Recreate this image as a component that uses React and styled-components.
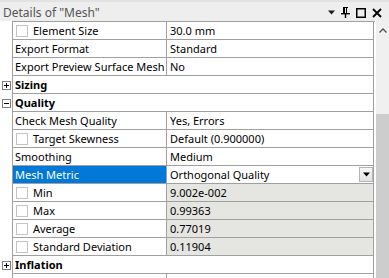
import React from 'react';
import styled, { createGlobalStyle, css } from 'styled-components';

const GlobalStyle = createGlobalStyle`
  html, body {
    margin: 0;
    padding: 0;
    background: #ffffff;
  }
  body {
    font-family: "Noto Sans", "Open Sans", sans-serif;
    font-size: 11px;
    color: #000;
  }
`;

const Panel = styled.div`
  width: 389px;
  height: 278px;
  overflow: hidden;
  display: flex;
  flex-direction: column;
  background: #ffffff;
`;

const TitleBar = styled.div`
  height: 21px;
  flex: 0 0 21px;
  display: flex;
  align-items: center;
  gap: 4px;
  padding: 2px 7px 0 3px;
  box-sizing: border-box;
  background: #eeeeee;
  border-top: 2px solid #e2e2e2;
  color: #555555;
  font-size: 12px;
`;

const Grip = styled.div`
  flex: 1;
  height: 4px;
  margin: 2px 4px 0 2px;
  background-image: radial-gradient(circle, #c4c4c4 0.5px, transparent 0.6px);
  background-size: 2px 2px;
`;

const TitleIcons = styled.div`
  display: flex;
  align-items: center;
  gap: 6px;
`;

const Body = styled.div`
  flex: 1;
  display: flex;
  min-height: 0;
`;

const Grid = styled.div`
  width: 375px;
  display: flex;
  flex-direction: column;
`;

const Row = styled.div`
  display: grid;
  grid-template-columns: 12px 154px 208px;
  height: 18px;
  flex: 0 0 18px;
`;

const Gutter = styled.div`
  display: flex;
  align-items: center;
  justify-content: center;
  padding-left: 1px;
`;

const Toggle = styled.div`
  width: 7px;
  height: 7px;
  border: 1px solid #808080;
  position: relative;
  background: #fff;
  &::before {
    content: '';
    position: absolute;
    left: 1px;
    right: 1px;
    top: 3px;
    height: 1px;
    background: #000;
  }
  ${({ open }) => !open && css`
    &::after {
      content: '';
      position: absolute;
      top: 1px;
      bottom: 1px;
      left: 3px;
      width: 1px;
      background: #000;
    }
  `}
`;

const NameCell = styled.div`
  display: flex;
  align-items: center;
  gap: 5px;
  padding-left: ${({ indent }) => (indent ? '3px' : '2px')};
  border-left: 1px solid #a0a0a0;
  border-bottom: 1px solid #a0a0a0;
  white-space: nowrap;
  overflow: hidden;
  ${({ selected }) => selected && css`
    background: #0078d7;
    color: #ffffff;
  `}
`;

const ValueCell = styled.div`
  display: flex;
  align-items: center;
  padding-left: 3px;
  border-left: 1px solid #a0a0a0;
  border-right: 1px solid #a0a0a0;
  border-bottom: 1px solid #a0a0a0;
  white-space: nowrap;
  background: ${({ readOnly }) => (readOnly ? '#e5e5e2' : '#ffffff')};
`;

const CategoryCell = styled.div`
  grid-column: 2 / 4;
  display: flex;
  align-items: center;
  padding-left: 2px;
  font-weight: bold;
  border-left: 1px solid #a0a0a0;
  border-right: 1px solid #a0a0a0;
  border-bottom: 1px solid #a0a0a0;
`;

const TopLine = styled.div`
  margin-left: 12px;
  width: 363px;
  height: 1px;
  flex: 0 0 1px;
  background: #a0a0a0;
`;

const Check = styled.span`
  width: 10px;
  height: 10px;
  border: 1px solid #c4c4c4;
  background: #fff;
  flex: 0 0 auto;
`;

const DropButton = styled.div`
  margin-left: auto;
  width: 14px;
  height: 15px;
  box-sizing: border-box;
  border: 1px solid #b5b5b5;
  background: linear-gradient(#f7f7f7, #e2e2e2);
  display: flex;
  align-items: center;
  justify-content: center;
`;

const Scrollbar = styled.div`
  width: 13px;
  margin-left: 1px;
  background: #f0f0f0;
  display: flex;
  flex-direction: column;
  align-items: center;
`;

const ArrowBox = styled.div`
  height: 18px;
  flex: 0 0 18px;
  display: flex;
  align-items: center;
  justify-content: center;
`;

const Thumb = styled.div`
  margin-top: 75px;
  width: 13px;
  flex: 1;
  background: #cdcdcd;
`;

const DownTri = ({ size = 7, color = '#000' }) => (
  <svg width={size} height={Math.ceil(size / 2) + 1} viewBox="0 0 7 4">
    <path d="M0 0H7L3.5 4Z" fill={color} />
  </svg>
);

const PinIcon = () => (
  <svg width="9" height="11" viewBox="0 0 9 11">
    <path d="M2 0H7V1H6V6H5V1H2Z" fill="#000" />
    <rect x="2" y="0" width="2" height="6" fill="#000" />
    <rect x="0" y="6" width="9" height="1.4" fill="#000" />
    <rect x="3.8" y="7" width="1.4" height="4" fill="#000" />
  </svg>
);

const MaxIcon = () => (
  <svg width="10" height="10" viewBox="0 0 10 10">
    <rect x="0.75" y="0.75" width="8.5" height="8.5" fill="none" stroke="#000" strokeWidth="1.5" />
  </svg>
);

const CloseIcon = () => (
  <svg width="10" height="10" viewBox="0 0 10 10">
    <path d="M1 1L9 9M9 1L1 9" stroke="#000" strokeWidth="1.8" />
  </svg>
);

const UpChevron = () => (
  <svg width="8" height="5" viewBox="0 0 8 5">
    <path d="M0.5 4.5L4 1L7.5 4.5" fill="none" stroke="#505050" strokeWidth="1.3" />
  </svg>
);

const rows = [
  { name: 'Element Size', value: '30.0 mm', check: true },
  { name: 'Export Format', value: 'Standard' },
  { name: 'Export Preview Surface Mesh', value: 'No' },
  { category: 'Sizing', open: false },
  { category: 'Quality', open: true },
  { name: 'Check Mesh Quality', value: 'Yes, Errors' },
  { name: 'Target Skewness', value: 'Default (0.900000)', check: true },
  { name: 'Smoothing', value: 'Medium' },
  { name: 'Mesh Metric', value: 'Orthogonal Quality', selected: true, dropdown: true },
  { name: 'Min', value: '9.002e-002', check: true, readOnly: true },
  { name: 'Max', value: '0.99363', check: true, readOnly: true },
  { name: 'Average', value: '0.77019', check: true, readOnly: true },
  { name: 'Standard Deviation', value: '0.11904', check: true, readOnly: true },
  { category: 'Inflation', open: false },
  { name: '', value: '' },
];

const App = () => (
  <>
    <GlobalStyle />
    <Panel>
      <TitleBar>
        <span>Details of "Mesh"</span>
        <Grip />
        <TitleIcons>
          <DownTri size={7} color="#1a1a1a" />
          <PinIcon />
          <MaxIcon />
          <CloseIcon />
        </TitleIcons>
      </TitleBar>
      <Body>
        <Grid>
          <TopLine />
          {rows.map((row, i) => (
            row.category ? (
              <Row key={i}>
                <Gutter><Toggle open={row.open} /></Gutter>
                <CategoryCell>{row.category}</CategoryCell>
              </Row>
            ) : (
              <Row key={i}>
                <Gutter />
                <NameCell indent={row.check} selected={row.selected}>
                  {row.check && <Check />}
                  {row.name}
                </NameCell>
                <ValueCell readOnly={row.readOnly}>
                  {row.value}
                  {row.dropdown && (
                    <DropButton><DownTri size={7} /></DropButton>
                  )}
                </ValueCell>
              </Row>
            )
          ))}
        </Grid>
        <Scrollbar>
          <ArrowBox><UpChevron /></ArrowBox>
          <Thumb />
        </Scrollbar>
      </Body>
    </Panel>
  </>
);

export default App;
